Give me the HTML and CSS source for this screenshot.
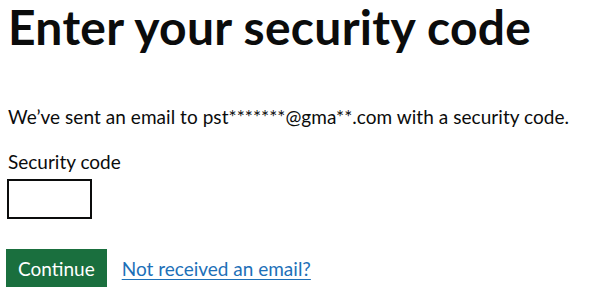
FILE: index.html
```html
<!DOCTYPE html>
<html lang="en">
<head>
<meta charset="utf-8">
<title>Enter your security code</title>
<link rel="stylesheet" href="styles.css">
</head>
<body>
<main class="page">
  <h1 class="heading">Enter your security code</h1>
  <p class="body">We’ve sent an email to pst*******@gma**.com with a security code.</p>
  <div class="form-group">
    <label class="label" for="code">Security code</label>
    <input class="input" id="code" type="text">
  </div>
  <div class="actions">
    <button class="button" type="button">Continue</button>
    <a class="link" href="#">Not received an email?</a>
  </div>
</main>
</body>
</html>
```
FILE: styles.css
```css
html, body {
  margin: 0;
  padding: 0;
  background: #ffffff;
}
.page {
  padding: 0 8px;
  font-family: Lato, "Liberation Sans", sans-serif;
  color: #0b0c0c;
}
.heading {
  margin: 0 0 50px;
  font-size: 48px;
  line-height: 54px;
  font-weight: 700;
  letter-spacing: 0.3px;
}
.body {
  margin: 0 0 20px;
  font-size: 19px;
  line-height: 25px;
  letter-spacing: 0.05px;
}
.form-group {
  display: flex;
  flex-direction: column;
  align-items: flex-start;
  margin-bottom: 30px;
}
.label {
  font-size: 19px;
  line-height: 25px;
  margin-bottom: 5px;
}
.input {
  box-sizing: border-box;
  width: 85px;
  height: 40px;
  border: 2px solid #0b0c0c;
  margin: 0 0 0 -1px;
  padding: 5px;
  font: inherit;
}
.actions {
  display: flex;
  align-items: center;
  gap: 15px;
}
.button {
  margin-left: -2px;
  box-sizing: border-box;
  height: 38px;
  padding: 0 12px;
  border: 0;
  background: #1a6f3e;
  color: #fff;
  font-family: inherit;
  font-size: 19px;
  box-shadow: 0 2px 0 #002d18;
}
.link {
  color: #1d70b8;
  font-size: 19px;
  text-decoration: underline;
  text-underline-offset: 3px;
}
```
